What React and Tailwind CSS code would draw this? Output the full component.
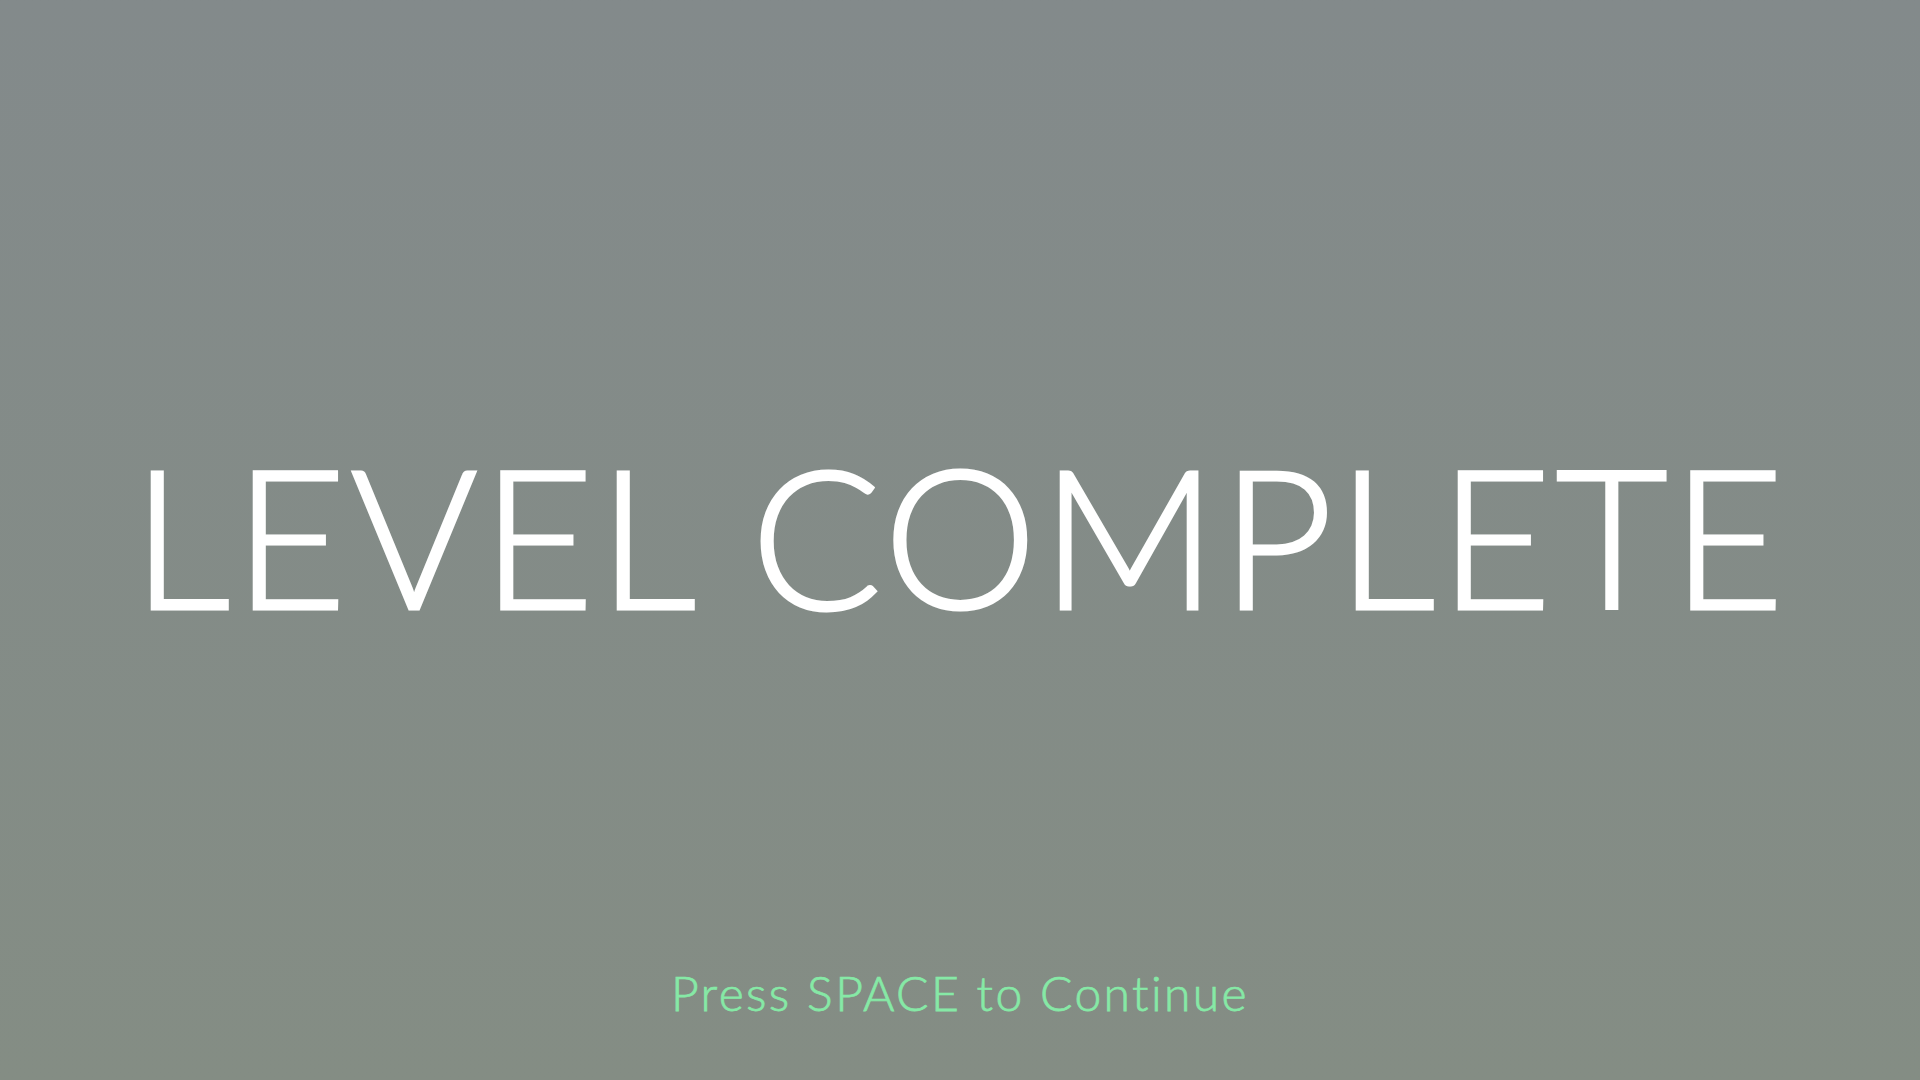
const App = () => {
  return (
    <div
      className="flex h-screen w-full flex-col bg-linear-to-b from-[#838a8b] to-[#848d84] text-center"
      style={{ fontFamily: "Lato, 'Noto Sans', sans-serif" }}
    >
      <div className="flex-1" />
      <h1 className="pt-[50px] text-[194px] font-light uppercase leading-none tracking-[0.02em] text-white [-webkit-text-stroke:3px_white]">
        Level Complete
      </h1>
      <div className="flex flex-1 flex-col justify-end pb-[63px]">
        <p className="text-5xl font-light tracking-[0.05em] text-[#86e9a6] [-webkit-text-stroke:0.75px_#86e9a6]">
          Press SPACE to Continue
        </p>
      </div>
    </div>
  );
};

export default App;
